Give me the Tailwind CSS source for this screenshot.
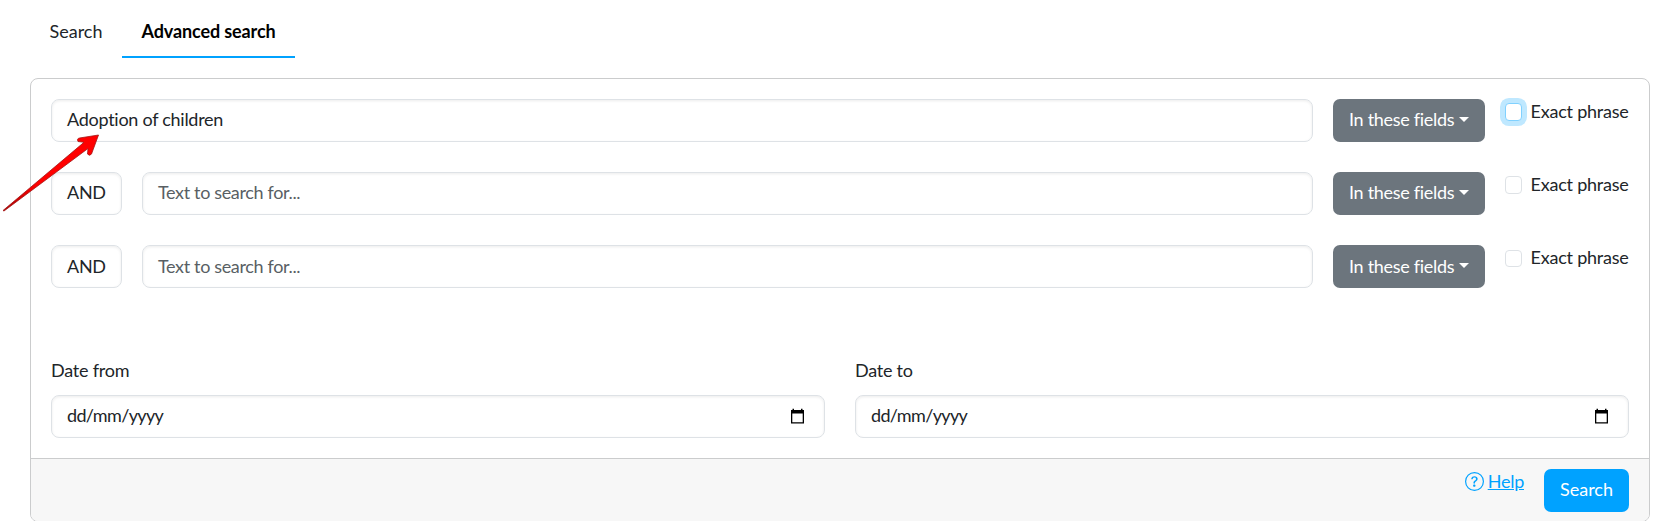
<!DOCTYPE html>
<html lang="en">
<head>
<meta charset="utf-8">
<title>Advanced search</title>
<script src="https://cdn.jsdelivr.net/npm/@tailwindcss/browser@4"></script>
</head>
<body class="relative h-[521px] overflow-hidden bg-white font-['Lato',sans-serif] text-[18px] leading-[27px] text-[#212529]">
<nav class="ml-[30px] flex h-[58px]">
  <a class="w-[92px] pt-[18px] pl-[19.5px]">Search</a>
  <a class="w-[173px] border-b-2 border-[#00a2ff] pt-[18px] text-center font-bold tracking-[-0.12px] text-black">Advanced search</a>
</nav>
<main class="mt-5 ml-[30px] flex h-[444px] w-[1620px] flex-col overflow-hidden rounded-lg border border-[#cbcccd]">
  <div class="flex h-[379px] flex-col px-5 pt-5">
    <div class="flex h-[73px] items-start">
      <div class="h-[43px] w-[1262px] shrink-0 rounded-lg border border-[#dee2e6] px-[15px] pt-[6px] tracking-[-0.27px] shadow-[inset_0_1px_3px_rgba(0,0,0,0.08)]">Adoption of children</div>
      <button class="ml-5 flex h-[43px] w-[152px] shrink-0 items-center rounded-[7px] bg-[#6c757d] pb-[2px] pl-4 tracking-[-0.3px] text-white">In these fields<span class="ml-[5px] border-x-[5px] border-t-[5px] border-x-transparent border-t-white"></span></button>
      <label class="ml-5 flex"><span class="mt-1 h-[18px] w-[17px] rounded-[4px] border border-[#80d1ff] bg-white shadow-[0_0_0_5px_#bfe8ff]"></span><span class="-mt-px ml-[8.5px] whitespace-nowrap tracking-[-0.22px]">Exact phrase</span></label>
    </div>
    <div class="flex h-[73px] items-start">
      <div class="h-[43px] w-[71px] shrink-0 rounded-lg border border-[#dee2e6] px-[15px] pt-[6px] tracking-[-0.3px] shadow-[inset_0_1px_3px_rgba(0,0,0,0.08)]">AND</div>
      <div class="ml-5 h-[43px] w-[1171px] shrink-0 rounded-lg border border-[#dee2e6] px-[15px] pt-[6px] tracking-[-0.35px] text-[#595f64] shadow-[inset_0_1px_3px_rgba(0,0,0,0.08)]">Text to search for...</div>
      <button class="ml-5 flex h-[43px] w-[152px] shrink-0 items-center rounded-[7px] bg-[#6c757d] pb-[2px] pl-4 tracking-[-0.3px] text-white">In these fields<span class="ml-[5px] border-x-[5px] border-t-[5px] border-x-transparent border-t-white"></span></button>
      <label class="ml-5 flex"><span class="mt-1 h-[18px] w-[17px] rounded-[4px] border border-[#dee2e6]"></span><span class="-mt-px ml-[8.5px] whitespace-nowrap tracking-[-0.22px]">Exact phrase</span></label>
    </div>
    <div class="flex h-[105px] items-start">
      <div class="h-[43px] w-[71px] shrink-0 rounded-lg border border-[#dee2e6] px-[15px] pt-[7px] tracking-[-0.3px] shadow-[inset_0_1px_3px_rgba(0,0,0,0.08)]">AND</div>
      <div class="ml-5 h-[43px] w-[1171px] shrink-0 rounded-lg border border-[#dee2e6] px-[15px] pt-[7px] tracking-[-0.35px] text-[#595f64] shadow-[inset_0_1px_3px_rgba(0,0,0,0.08)]">Text to search for...</div>
      <button class="ml-5 flex h-[43px] w-[152px] shrink-0 items-center rounded-[7px] bg-[#6c757d] pl-4 tracking-[-0.3px] text-white">In these fields<span class="mb-[2px] ml-[5px] border-x-[5px] border-t-[5px] border-x-transparent border-t-white"></span></button>
      <label class="ml-5 flex"><span class="mt-[5px] h-[17px] w-[17px] rounded-[4px] border border-[#dee2e6]"></span><span class="-mt-px ml-[8.5px] whitespace-nowrap tracking-[-0.22px]">Exact phrase</span></label>
    </div>
    <div class="flex gap-[30px] pt-[7px]">
      <div class="w-[774px]">
        <div class="h-[38px] tracking-[-0.22px]">Date from</div>
        <div class="flex h-[43px] justify-between rounded-lg border border-[#dee2e6] pt-[6px] pr-[19px] pl-[15px] tracking-[-0.65px] shadow-[inset_0_1px_3px_rgba(0,0,0,0.08)]"><span>dd/mm/yyyy</span><svg class="mt-[6px]" width="15" height="16" viewBox="0 0 15 16"><path d="M1 2h13v13.500H1zM2.300 5.500v8.700h10.400V5.500z" fill="#000" fill-rule="evenodd"/><path d="M2.500 .8H4v2H2.500zM11 .8h1.500v2H11z"/></svg></div>
      </div>
      <div class="w-[774px]">
        <div class="h-[38px] tracking-[-0.25px]">Date to</div>
        <div class="flex h-[43px] justify-between rounded-lg border border-[#dee2e6] pt-[6px] pr-[19px] pl-[15px] tracking-[-0.65px] shadow-[inset_0_1px_3px_rgba(0,0,0,0.08)]"><span>dd/mm/yyyy</span><svg class="mt-[6px]" width="15" height="16" viewBox="0 0 15 16"><path d="M1 2h13v13.500H1zM2.300 5.500v8.700h10.400V5.500z" fill="#000" fill-rule="evenodd"/><path d="M2.500 .8H4v2H2.500zM11 .8h1.500v2H11z"/></svg></div>
      </div>
    </div>
  </div>
  <footer class="flex h-[63px] grow items-start justify-end border-t border-[#cbcccd] bg-[#f7f7f7] pt-[10px] pr-5 text-[#00a2ff]">
    <svg class="mt-[3px] mr-[4px]" width="19" height="19" viewBox="0 0 16 16" fill="currentColor"><path d="M8 15A7 7 0 1 1 8 1a7 7 0 0 1 0 14m0 1A8 8 0 1 0 8 0a8 8 0 0 0 0 16"/><path d="M5.255 5.786a.237.237 0 0 0 .241.247h.825c.138 0 .248-.113.266-.25.09-.656.54-1.134 1.342-1.134.686 0 1.314.343 1.314 1.168 0 .635-.374.927-.965 1.371-.673.489-1.206 1.060-1.168 1.987l.003.217a.25.25 0 0 0 .25.246h.811a.25.25 0 0 0 .25-.25v-.105c0-.718.273-.927 1.010-1.486.609-.463 1.244-.977 1.244-2.056 0-1.511-1.276-2.241-2.673-2.241-1.267 0-2.655.590-2.750 2.286m1.557 5.763c0 .533.425.927 1.010.927.609 0 1.028-.394 1.028-.927 0-.552-.42-.940-1.029-.940-.584 0-1.009.388-1.009.940"/></svg>
    <a class="-mt-px tracking-[-0.25px] underline">Help</a>
    <button class="ml-5 h-[43px] w-[85px] rounded-[7px] bg-[#00a2ff] pb-[2px] text-white">Search</button>
  </footer>
</main>
<svg class="absolute top-[130px] left-0" width="104" height="84" viewBox="0 0 104 84"><defs><linearGradient id="arrow" x1="0" y1="1" x2="1" y2="0"><stop offset="0" stop-color="#a80000"/><stop offset=".35" stop-color="#f00"/><stop offset="1" stop-color="#f00"/></linearGradient></defs><path d="M3 80.500 84 12.300 78 11.500Q76.500 8.500 79.500 8L98.500 5 91.500 24Q89.500 26.500 87.500 24L88 18.500 4 81Z" fill="url(#arrow)" stroke="#a31515" stroke-width=".8" stroke-linejoin="round"/></svg>
</body>
</html>
